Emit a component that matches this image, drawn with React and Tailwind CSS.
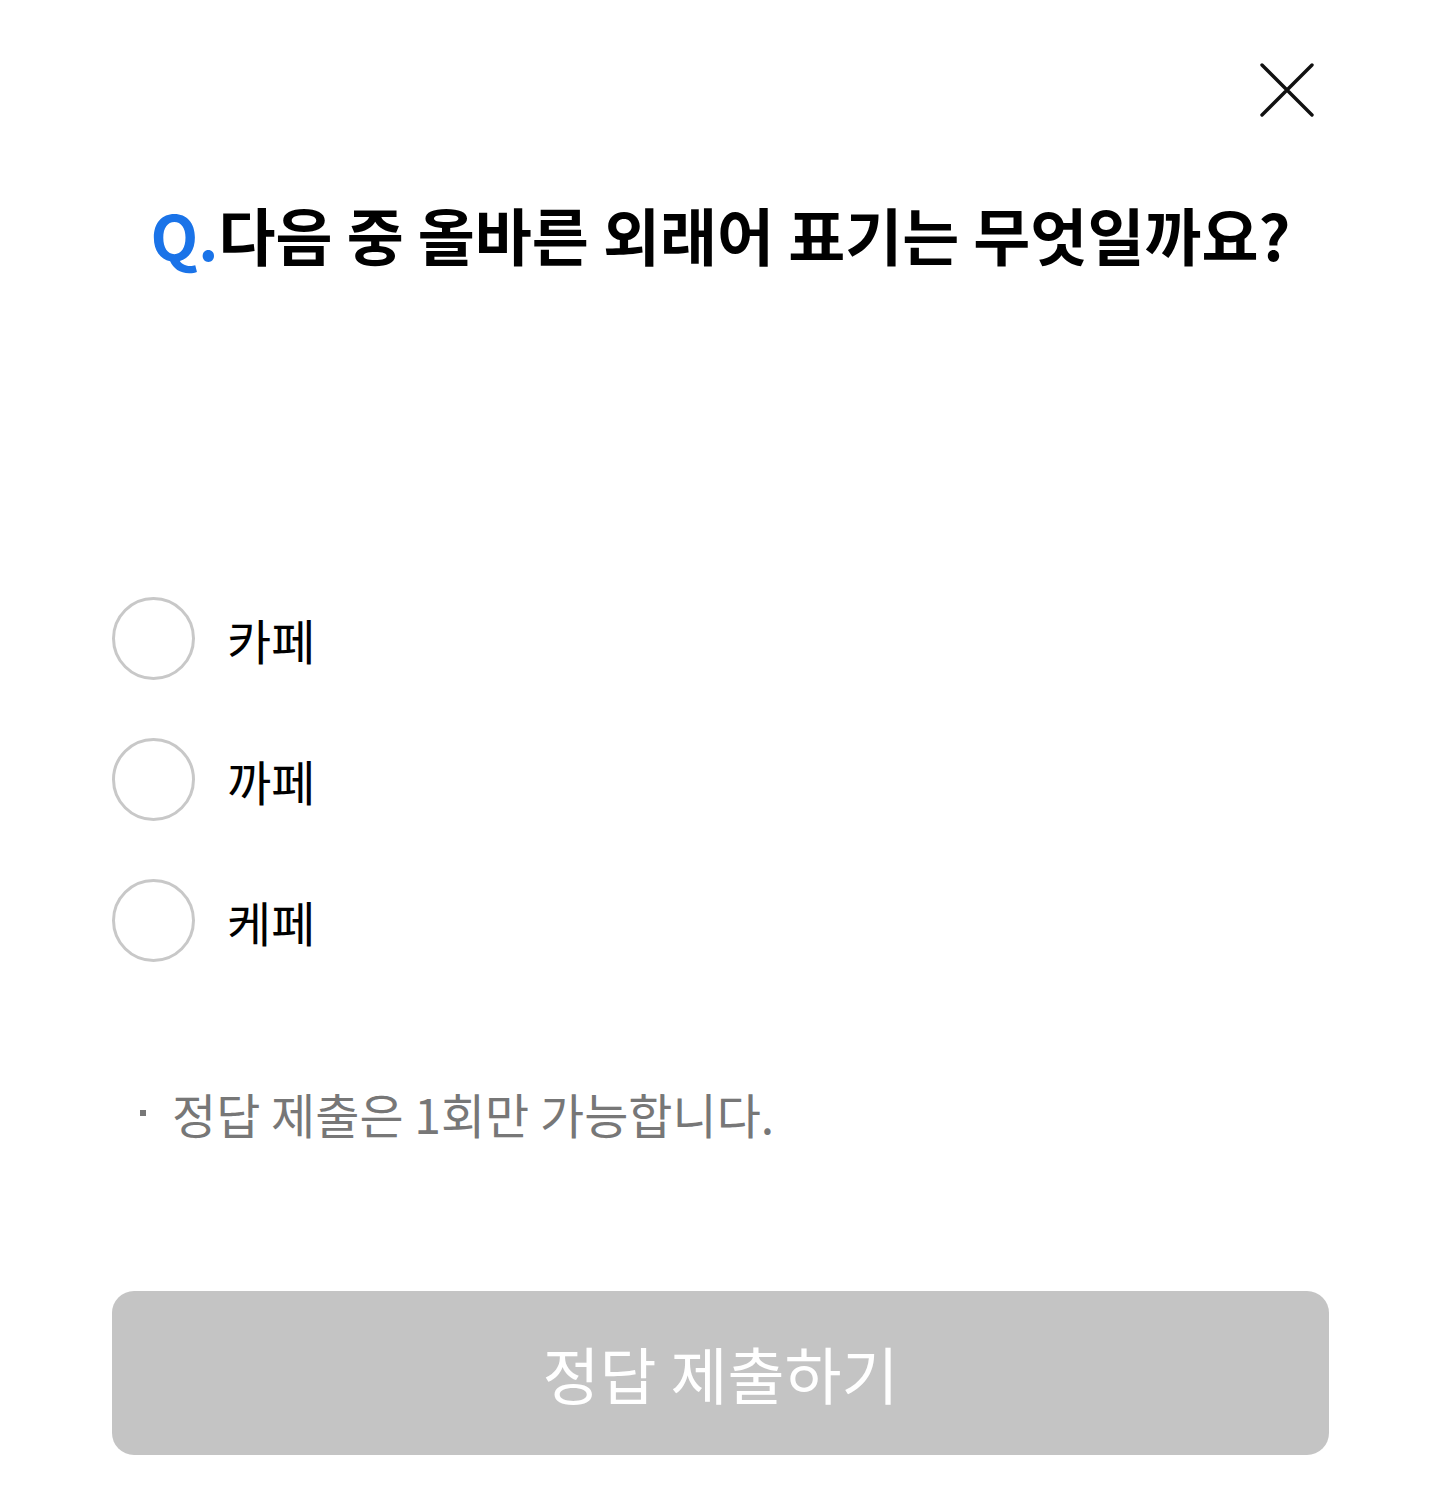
import { useState } from 'react';

const OPTIONS = ['카페', '까페', '케페'];

export default function App() {
  const [picked, setPicked] = useState(null);

  return (
    <div
      className="min-h-[1494px] w-full bg-white flex flex-col pl-[112px] pr-[110px] pb-[39px]"
      style={{ fontFamily: '"Noto Sans CJK KR", "Noto Sans", sans-serif' }}
    >
      {/* Close */}
      <div className="flex justify-end pt-[62px] pr-[14px]">
        <button className="w-[56px] h-[56px] flex items-center justify-center">
          <svg width="56" height="56" viewBox="0 0 56 56">
            <path d="M3 3 L53 53 M53 3 L3 53" stroke="#111" strokeWidth="3.4" strokeLinecap="round" />
          </svg>
        </button>
      </div>

      {/* Question */}
      <h1 className="mt-[71px] text-center text-[62px] leading-[90px] font-bold text-black">
        <span className="text-[#1a73e8]">Q.</span>다음 중 올바른 외래어 표기는 무엇일까요?
      </h1>

      {/* Options */}
      <div className="mt-[318px] flex flex-col gap-[58px]">
        {OPTIONS.map((o, i) => (
          <label key={o} className="flex items-center gap-[32px] cursor-pointer" onClick={() => setPicked(i)}>
            <span
              className={
                'w-[83px] h-[83px] rounded-full border-[3px] ' +
                (picked === i ? 'border-[#1a73e8]' : 'border-[#c8c8c8]')
              }
            />
            <span className="text-[48px] leading-[60px] text-black">{o}</span>
          </label>
        ))}
      </div>

      {/* Note */}
      <p className="mt-[121px] ml-[28px] text-[48px] leading-[60px] text-[#777777] flex items-center">
        <span className="w-[6px] h-[6px] bg-[#777777] mr-[26px]" />
        정답 제출은 1회만 가능합니다.
      </p>

      {/* Submit */}
      <button className="mt-[148px] h-[164px] w-full rounded-[22px] bg-[#c4c4c4] text-white text-[62px] font-normal flex items-center justify-center">
        정답 제출하기
      </button>
    </div>
  );
}
